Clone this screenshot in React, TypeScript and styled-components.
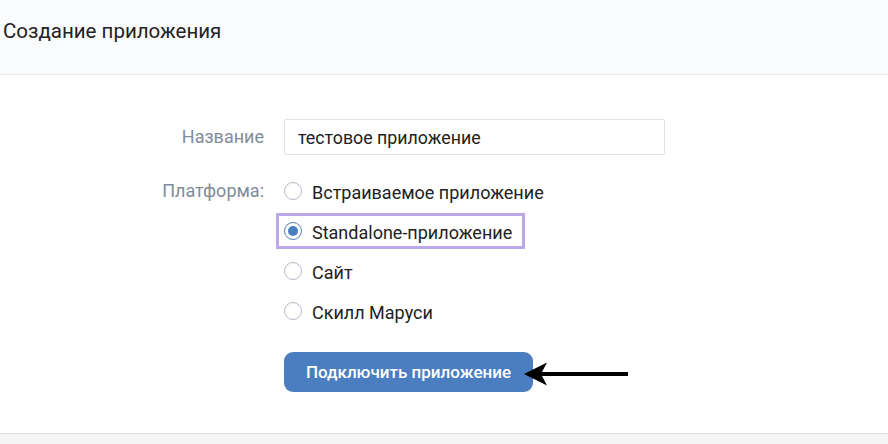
import styled, { createGlobalStyle } from 'styled-components';

const GlobalStyle = createGlobalStyle`
  html, body {
    margin: 0;
    padding: 0;
    height: 100%;
    background: #ffffff;
    font-family: Roboto, 'Noto Sans', Arial, sans-serif;
  }
  #root {
    height: 100%;
  }
`;

const platforms = [
  'Встраиваемое приложение',
  'Standalone-приложение',
  'Сайт',
  'Скилл Маруси',
];

const App = () => {
  const selected = 1;

  return (
    <>
      <GlobalStyle />
      <Page>
        <Header>
          <Title>Создание приложения</Title>
        </Header>

        <Form>
          <Label>Название</Label>
          <Input value="тестовое приложение" readOnly />

          <Label>Платформа:</Label>
          <Options>
            {platforms.map((name, i) => (
              <Option key={name} $active={i === selected}>
                <Radio $checked={i === selected} />
                <OptionText>{name}</OptionText>
              </Option>
            ))}
          </Options>

          <span />
          <Actions>
            <Button>Подключить приложение</Button>
            <Arrow width="104" height="26" viewBox="0 0 104 26">
              <path d="M0 13 L23 1.5 L18 11 L104 11 L104 15 L18 15 L23 24.5 Z" fill="#000" />
            </Arrow>
          </Actions>
        </Form>

        <Footer />
      </Page>
    </>
  );
};

export default App;

const Page = styled.div`
  display: flex;
  flex-direction: column;
  height: 100%;
`;

const Header = styled.header`
  display: flex;
  align-items: center;
  height: 74px;
  padding: 0 3px;
  background-color: #fafbfd;
  border-bottom: 1px solid #e7e8ec;
  box-sizing: content-box;
`;

const Title = styled.h1`
  margin: 0;
  font-size: 20.5px;
  font-weight: 400;
  color: #222222;
  position: relative;
  top: -6px;
`;

const Form = styled.main`
  flex: 1;
  display: grid;
  grid-template-columns: 264px 381px;
  column-gap: 20px;
  row-gap: 18px;
  align-content: start;
  padding-top: 44px;
`;

const Label = styled.div`
  text-align: right;
  font-size: 18px;
  line-height: 36px;
  color: #818c99;
`;

const Input = styled.input`
  box-sizing: border-box;
  height: 36px;
  width: 381px;
  padding: 0 13px;
  border: 1px solid #dfe2e7;
  border-radius: 2px;
  font-family: inherit;
  font-size: 17.8px;
  color: #222222;
  outline: none;
`;

const Options = styled.div`
  display: flex;
  flex-direction: column;
  gap: 4px;
`;

const Option = styled.label<{ $active?: boolean }>`
  box-sizing: border-box;
  display: flex;
  align-items: center;
  gap: 10px;
  width: fit-content;
  height: 36px;
  margin-left: -8px;
  padding: 0 10px 0 5px;
  border: 3px solid ${p => (p.$active ? '#bba8e6' : 'transparent')};
`;

const Radio = styled.span<{ $checked?: boolean }>`
  box-sizing: border-box;
  width: 18px;
  height: 18px;
  border-radius: 50%;
  border: 1px solid ${p => (p.$checked ? '#5181b8' : '#b4bcc6')};
  display: flex;
  align-items: center;
  justify-content: center;
  &::after {
    content: '';
    display: ${p => (p.$checked ? 'block' : 'none')};
    width: 10px;
    height: 10px;
    border-radius: 50%;
    background: #4a7dbe;
  }
`;

const OptionText = styled.span`
  font-size: 18px;
  color: #222222;
  position: relative;
  top: 1px;
`;

const Actions = styled.div`
  position: relative;
  margin-top: 5px;
`;

const Button = styled.button`
  height: 40px;
  width: 249px;
  border: none;
  border-radius: 9px;
  background-color: #4b7ec0;
  color: #ffffff;
  font-family: inherit;
  font-size: 17px;
  font-weight: 500;
  cursor: pointer;
`;

const Arrow = styled.svg`
  position: absolute;
  left: 240px;
  top: 9px;
`;

const Footer = styled.footer`
  height: 10px;
  background-color: #f5f5f6;
  border-top: 1px solid #e3e4e8;
`;
